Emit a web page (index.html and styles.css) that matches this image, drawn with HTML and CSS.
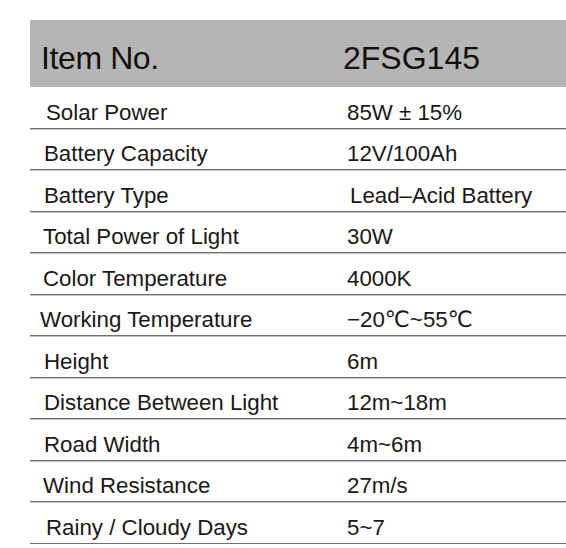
FILE: index.html
```html
<!DOCTYPE html>
<html lang="en">
<head>
<meta charset="utf-8">
<title>2FSG145</title>
<link rel="stylesheet" href="styles.css">
</head>
<body>
<div class="spec">
  <div class="head">
    <div class="h-label">Item No.</div>
    <div class="h-value">2FSG145</div>
  </div>
  <div class="row"><div class="label in">Solar Power</div><div class="value">85W ± 15%</div></div>
  <div class="row"><div class="label">Battery Capacity</div><div class="value">12V/100Ah</div></div>
  <div class="row"><div class="label">Battery Type</div><div class="value in">Lead–Acid Battery</div></div>
  <div class="row"><div class="label left">Total Power of Light</div><div class="value">30W</div></div>
  <div class="row"><div class="label left">Color Temperature</div><div class="value">4000K</div></div>
  <div class="row"><div class="label out">Working Temperature</div><div class="value">−20℃~55℃</div></div>
  <div class="row"><div class="label">Height</div><div class="value">6m</div></div>
  <div class="row"><div class="label">Distance Between Light</div><div class="value">12m~18m</div></div>
  <div class="row"><div class="label">Road Width</div><div class="value">4m~6m</div></div>
  <div class="row"><div class="label left">Wind Resistance</div><div class="value">27m/s</div></div>
  <div class="row"><div class="label in">Rainy / Cloudy Days</div><div class="value">5~7</div></div>
</div>
</body>
</html>
```

FILE: styles.css
```css
html, body {
  margin: 0;
  padding: 0;
  background: #ffffff;
}

body {
  font-family: "Liberation Sans", Arial, "DejaVu Sans", sans-serif;
  color: #1a1717;
}

.spec {
  margin: 20px 0 0 30px;
  display: flex;
  flex-direction: column;
}

.head {
  display: grid;
  grid-template-columns: 313px 1fr;
  align-items: end;
  height: 67px;
  box-sizing: border-box;
  padding-bottom: 11px;
  background: #b5b5b5;
  font-size: 32px;
  line-height: 36px;
  color: #140e0e;
}

.h-label {
  padding-left: 11px;
  letter-spacing: -0.4px;
}

.h-value {
  padding-left: 0;
}

.row {
  display: grid;
  grid-template-columns: 317px 1fr;
  align-items: end;
  height: 41.5px;
  box-sizing: border-box;
  padding-bottom: 3px;
  border-bottom: 1px solid #6e6e6e;
  box-shadow: 0 1px 0 #c4c4c4;
  font-size: 22.3px;
  line-height: 24px;
}

.label {
  padding-left: 14px;
}

.label.in {
  padding-left: 16px;
}

.label.left {
  padding-left: 13px;
}

.label.out {
  padding-left: 10px;
}

.value {
  padding-left: 0;
}

.value.in {
  padding-left: 3px;
}
```
